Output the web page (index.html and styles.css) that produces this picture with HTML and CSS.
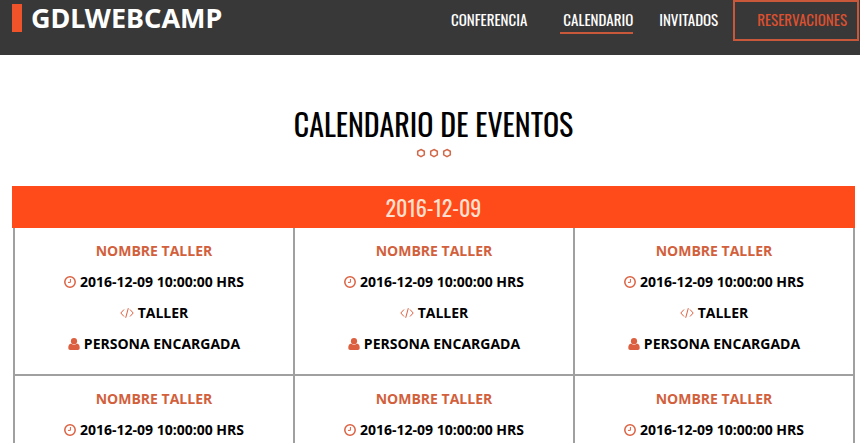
FILE: index.html
```
<!DOCTYPE html>
<html lang="es">
<head>
<meta charset="utf-8">
<meta name="viewport" content="width=device-width, initial-scale=1">
<title>GDLWEBCAMP</title>
<link rel="stylesheet" href="styles.css">
</head>
<body>
<svg class="sprite" aria-hidden="true">
  <symbol id="clock" viewBox="0 0 12 12"><circle cx="6" cy="6" r="5.200" fill="none" stroke="currentColor" stroke-width="1.500"/><path d="M6.400 3v3.400H4" fill="none" stroke="currentColor"/></symbol>
  <symbol id="code" viewBox="0 0 14 12"><path d="M4 2.500.8 6 4 9.500M10 2.500 13.200 6 10 9.500M8.300 1.200 5.700 10.800" fill="none" stroke="currentColor"/></symbol>
  <symbol id="user" viewBox="0 0 12 12"><circle cx="6" cy="3.200" r="3.100" fill="currentColor"/><path d="M3.200 5.500C1 5.800.3 7.800.3 9.800.3 11.200 1 12 2.200 12h7.600c1.200 0 1.900-.8 1.900-2.200 0-2-.7-4-2.900-4.300C7.200 7.200 4.800 7.200 3.200 5.500z" fill="currentColor"/></symbol>
  <symbol id="dots" viewBox="0 0 36 10"><g fill="none" stroke="#d2694a" stroke-width="1.500"><path d="M5 1.500 8.300 3.300v3.600L5 8.700 1.700 6.900V3.300z"/><path d="M18 1.500l3.300 1.800v3.600L18 8.700l-3.300-1.800V3.300z"/><path d="M31 1.500l3.300 1.800v3.600L31 8.700l-3.300-1.800V3.300z"/></g></symbol>
</svg>
<header class="bar">
  <a class="logo" href="#">GDLWEBCAMP</a>
  <nav class="nav">
    <a href="#">CONFERENCIA</a>
    <a class="active" href="#">CALENDARIO</a>
    <a href="#">INVITADOS</a>
    <a class="reserve" href="#">RESERVACIONES</a>
  </nav>
</header>
<main class="calendar">
  <h1>CALENDARIO DE EVENTOS</h1>
  <svg class="dots" aria-hidden="true"><use href="#dots"/></svg>
  <section class="day">
    <h2>2016-12-09</h2>
    <div class="events">
      <article class="event"><h3>NOMBRE TALLER</h3><p><svg class="icon"><use href="#clock"/></svg>2016-12-09 10:00:00 HRS</p><p><svg class="icon code"><use href="#code"/></svg>TALLER</p><p><svg class="icon"><use href="#user"/></svg>PERSONA ENCARGADA</p></article>
      <article class="event"><h3>NOMBRE TALLER</h3><p><svg class="icon"><use href="#clock"/></svg>2016-12-09 10:00:00 HRS</p><p><svg class="icon code"><use href="#code"/></svg>TALLER</p><p><svg class="icon"><use href="#user"/></svg>PERSONA ENCARGADA</p></article>
      <article class="event"><h3>NOMBRE TALLER</h3><p><svg class="icon"><use href="#clock"/></svg>2016-12-09 10:00:00 HRS</p><p><svg class="icon code"><use href="#code"/></svg>TALLER</p><p><svg class="icon"><use href="#user"/></svg>PERSONA ENCARGADA</p></article>
      <article class="event"><h3>NOMBRE TALLER</h3><p><svg class="icon"><use href="#clock"/></svg>2016-12-09 10:00:00 HRS</p></article>
      <article class="event"><h3>NOMBRE TALLER</h3><p><svg class="icon"><use href="#clock"/></svg>2016-12-09 10:00:00 HRS</p></article>
      <article class="event"><h3>NOMBRE TALLER</h3><p><svg class="icon"><use href="#clock"/></svg>2016-12-09 10:00:00 HRS</p></article>
    </div>
  </section>
</main>
</body>
</html>
```
FILE: styles.css
```
* { box-sizing: border-box; }
body { margin: 0; background: #fff; color: #000; font-family: "Open Sans", sans-serif; }
h1, h2, h3, p { margin: 0; }
a { color: inherit; text-decoration: none; }
.sprite { position: absolute; width: 0; height: 0; }
.bar { display: flex; justify-content: space-between; align-items: flex-start; background: #383838; color: #fff; padding: 0 1px 14px 12px; }
.logo { margin-top: 4px; border-left: 10px solid #f0532a; padding-left: 9px; font-family: "Noto Sans", sans-serif; font-size: 27px; line-height: 28px; font-weight: 700; }
.nav, h1, h2 { font-family: Oswald, "Roboto Condensed", "Liberation Sans Narrow", sans-serif; font-weight: 400; }
.nav { display: flex; align-items: flex-start; gap: 15px; font-size: 15px; line-height: 20px; }
.nav a { padding-top: 9px; }
.nav .active { border-bottom: 2px solid #c9583a; margin: 0 11px 0 18px; padding: 9px 0 3px 3px; }
.nav .reserve { color: #dc5030; border: 2px solid #c9583a; padding: 7px 10px 10px 22px; }
.calendar { padding: 49px 5px 0 12px; text-align: center; }
h1 { font-size: 30px; line-height: 40px; }
.dots { display: block; width: 36px; height: 10px; margin: 4px auto 28px; }
h2 { background: #ff4b1a; color: #ffe0d0; font-size: 22px; line-height: 42px; }
.events { display: grid; grid-template-columns: repeat(3, 1fr); border-left: 2px solid #a0a0a0; margin-left: 1px; }
.event { border-right: 2px solid #a0a0a0; border-bottom: 2px solid #a0a0a0; padding: 7px 0 15px; font-size: 14px; line-height: 31px; font-weight: 700; }
h3 { color: #d2603c; font-size: 14px; font-weight: 700; }
.event p { display: flex; justify-content: center; align-items: center; gap: 4px; }
.icon { width: 12px; height: 12px; color: #dc6040; }
.icon.code { width: 14px; }
```
